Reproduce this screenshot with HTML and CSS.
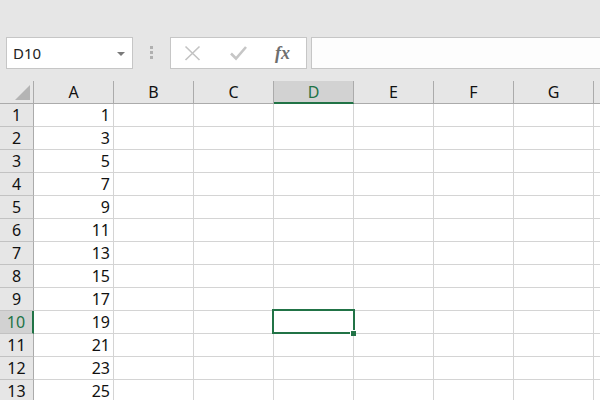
FILE: index.html
```html
<!DOCTYPE html>
<html>
<head>
<meta charset="utf-8">
<link rel="stylesheet" href="styles.css">
</head>
<body>
<div class="toolbar">
  <div class="namebox"><span class="name">D10</span><span class="drop"></span></div>
  <div class="dots"><i></i><i></i><i></i></div>
  <div class="fbtns">
    <svg class="ico" width="17" height="16" viewBox="0 0 17 16"><path d="M1.5 1.5 L15.5 15 M15.5 1.5 L1.5 15" stroke="#c3c3c3" stroke-width="1.6" fill="none"/></svg>
    <svg class="ico" width="17" height="16" viewBox="0 0 17 16"><path d="M1 8.5 L6 13.5 L16 2" stroke="#c6c6c6" stroke-width="2.6" fill="none"/></svg>
    <span class="fx">fx</span>
  </div>
  <div class="finput"></div>
</div>
<div class="sheet">
  <div class="corner"><span class="tri"></span></div>
  <div class="ch">A</div><div class="ch">B</div><div class="ch">C</div><div class="ch sel-col">D</div><div class="ch">E</div><div class="ch">F</div><div class="ch">G</div><div class="ch"></div>

  <div class="rh">1</div><div class="c num">1</div><div class="c"></div><div class="c"></div><div class="c"></div><div class="c"></div><div class="c"></div><div class="c"></div><div class="c"></div>
  <div class="rh">2</div><div class="c num">3</div><div class="c"></div><div class="c"></div><div class="c"></div><div class="c"></div><div class="c"></div><div class="c"></div><div class="c"></div>
  <div class="rh">3</div><div class="c num">5</div><div class="c"></div><div class="c"></div><div class="c"></div><div class="c"></div><div class="c"></div><div class="c"></div><div class="c"></div>
  <div class="rh">4</div><div class="c num">7</div><div class="c"></div><div class="c"></div><div class="c"></div><div class="c"></div><div class="c"></div><div class="c"></div><div class="c"></div>
  <div class="rh">5</div><div class="c num">9</div><div class="c"></div><div class="c"></div><div class="c"></div><div class="c"></div><div class="c"></div><div class="c"></div><div class="c"></div>
  <div class="rh">6</div><div class="c num">11</div><div class="c"></div><div class="c"></div><div class="c"></div><div class="c"></div><div class="c"></div><div class="c"></div><div class="c"></div>
  <div class="rh">7</div><div class="c num">13</div><div class="c"></div><div class="c"></div><div class="c"></div><div class="c"></div><div class="c"></div><div class="c"></div><div class="c"></div>
  <div class="rh">8</div><div class="c num">15</div><div class="c"></div><div class="c"></div><div class="c"></div><div class="c"></div><div class="c"></div><div class="c"></div><div class="c"></div>
  <div class="rh">9</div><div class="c num">17</div><div class="c"></div><div class="c"></div><div class="c"></div><div class="c"></div><div class="c"></div><div class="c"></div><div class="c"></div>
  <div class="rh sel-row">10</div><div class="c num">19</div><div class="c"></div><div class="c"></div><div class="c active"><span class="selbox"></span><span class="handle"></span></div><div class="c"></div><div class="c"></div><div class="c"></div><div class="c"></div>
  <div class="rh">11</div><div class="c num">21</div><div class="c"></div><div class="c"></div><div class="c"></div><div class="c"></div><div class="c"></div><div class="c"></div><div class="c"></div>
  <div class="rh">12</div><div class="c num">23</div><div class="c"></div><div class="c"></div><div class="c"></div><div class="c"></div><div class="c"></div><div class="c"></div><div class="c"></div>
  <div class="rh">13</div><div class="c num">25</div><div class="c"></div><div class="c"></div><div class="c"></div><div class="c"></div><div class="c"></div><div class="c"></div><div class="c"></div>
</div>
</body>
</html>
```

FILE: styles.css
```css
html, body {
  margin: 0;
  padding: 0;
}
body {
  width: 600px;
  height: 400px;
  overflow: hidden;
  background: #e6e6e6;
  font-family: "Noto Sans", "Open Sans", sans-serif;
  color: #1a1a1a;
}
.toolbar {
  height: 81px;
  box-sizing: border-box;
  padding: 37px 0 0 6px;
  display: flex;
  align-items: flex-start;
}
.namebox {
  width: 127px;
  height: 32px;
  box-sizing: border-box;
  background: #fff;
  border: 1px solid #c6c6c6;
  display: flex;
  align-items: center;
  justify-content: space-between;
  padding: 0 7px 0 6px;
}
.name {
  font-size: 15px;
  line-height: 20px;
  color: #222;
}
.drop {
  width: 0;
  height: 0;
  border-left: 4px solid transparent;
  border-right: 4px solid transparent;
  border-top: 4px solid #7a7a7a;
  margin-top: 1px;
}
.dots {
  margin-left: 17px;
  padding-top: 9px;
  display: flex;
  flex-direction: column;
  gap: 2px;
}
.dots i {
  display: block;
  width: 3px;
  height: 3px;
  background: #b0b0b0;
}
.fbtns {
  margin-left: 17px;
  width: 137px;
  height: 32px;
  box-sizing: border-box;
  background: #fff;
  border: 1px solid #c6c6c6;
  display: flex;
  align-items: center;
  padding-left: 13px;
  gap: 29px;
}
.ico {
  display: block;
}
.fx {
  font-family: "Liberation Serif", "DejaVu Serif", serif;
  font-style: italic;
  font-weight: bold;
  font-size: 18px;
  line-height: 20px;
  color: #6e6e6e;
  margin-left: -1px;
}
.finput {
  margin-left: 4px;
  margin-right: -10px;
  flex: 1;
  height: 32px;
  box-sizing: border-box;
  background: #fdfdfd;
  border: 1px solid #c6c6c6;
}
.sheet {
  display: grid;
  grid-template-columns: 34px repeat(7, 80px) 7px;
  grid-template-rows: 23px;
  grid-auto-rows: 23px;
  width: 601px;
  font-size: 16px;
  line-height: 22px;
}
.sheet > div {
  box-sizing: border-box;
}
.corner {
  border-right: 1px solid #ababab;
  border-bottom: 1px solid #ababab;
  background: #e6e6e6;
  position: relative;
}
.tri {
  position: absolute;
  right: 3px;
  bottom: 3px;
  width: 0;
  height: 0;
  border-left: 15px solid transparent;
  border-bottom: 15px solid #b4b4b4;
}
.ch {
  background: #e6e6e6;
  border-right: 1px solid #ababab;
  border-bottom: 1px solid #ababab;
  text-align: center;
  color: #111;
}
.ch.sel-col {
  background: #d2d2d2;
  color: #217346;
  border-bottom: 2px solid #217346;
}
.rh {
  background: #e6e6e6;
  border-right: 1px solid #ababab;
  border-bottom: 1px solid #c2c2c2;
  text-align: center;
  color: #111;
}
.rh.sel-row {
  background: #d2d2d2;
  color: #217346;
  border-right: 2px solid #217346;
}
.c {
  background: #fff;
  border-right: 1px solid #d4d4d4;
  border-bottom: 1px solid #d4d4d4;
}
.num {
  text-align: right;
  padding-right: 3px;
  color: #111;
}
.active {
  position: relative;
}
.selbox {
  position: absolute;
  left: -2px;
  top: -2px;
  right: -2px;
  bottom: -1px;
  border: 2px solid #217346;
}
.handle {
  position: absolute;
  right: -3px;
  bottom: -3px;
  width: 5px;
  height: 5px;
  background: #217346;
  border-left: 1px solid #fff;
  border-top: 1px solid #fff;
}
```
